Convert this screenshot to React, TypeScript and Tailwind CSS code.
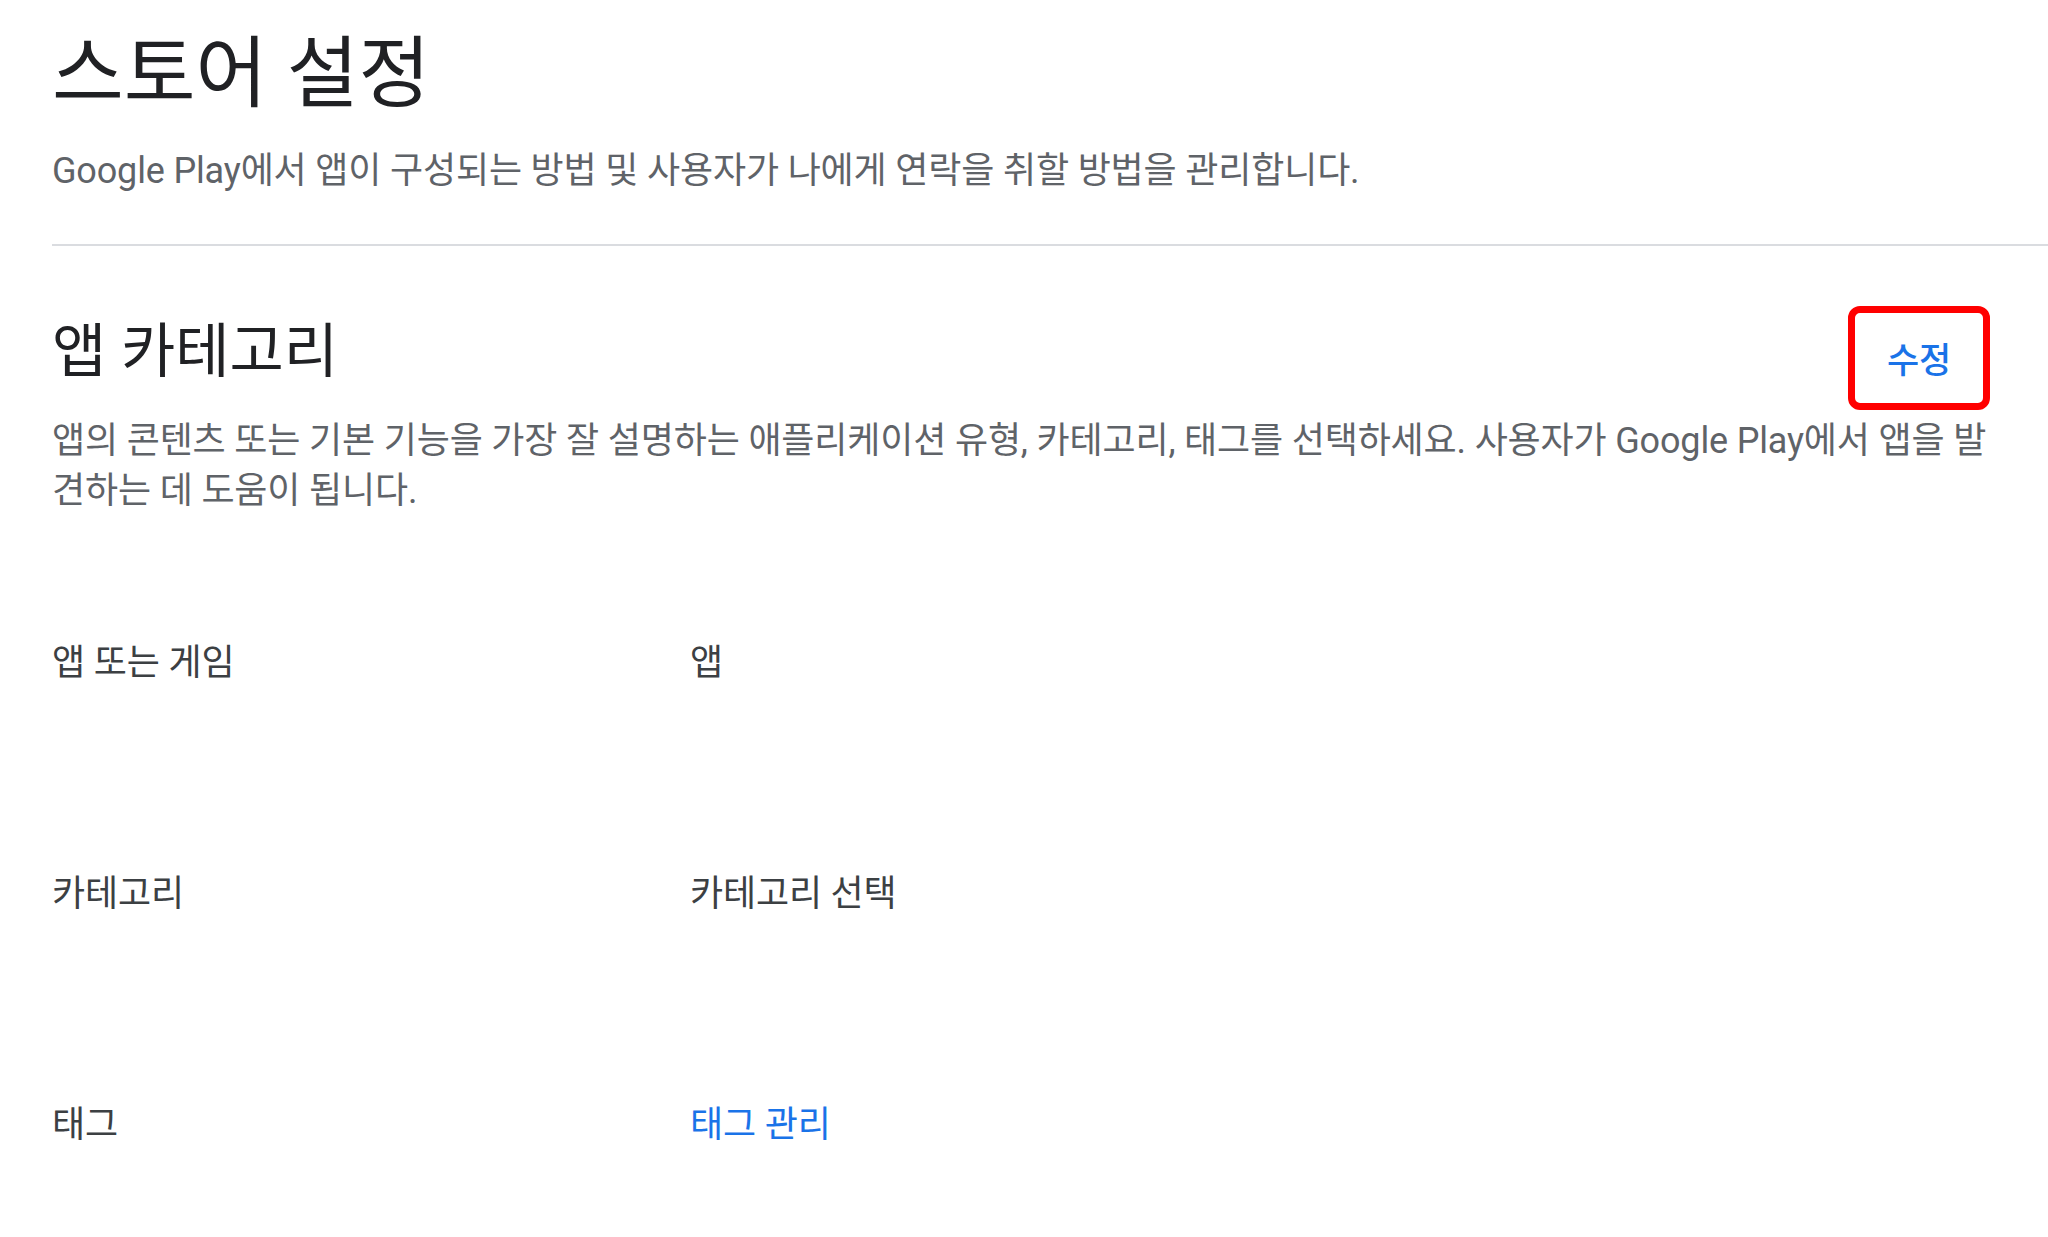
import React from "react";

const FONT = "font-['Roboto','Noto_Sans_CJK_KR',sans-serif]";

export default function App() {
  return (
    <div className={`min-h-screen bg-white pl-[52px] ${FONT} tracking-[-0.01em]`}>
      <div className="pr-[52px] pt-[27px]">
        <h1 className="text-[78px] leading-[96px] font-normal tracking-normal text-[#202124]">스토어 설정</h1>
        <p className="mt-[24px] text-[36px] leading-[48px] text-[#5f6368]">
          Google Play에서 앱이 구성되는 방법 및 사용자가 나에게 연락을 취할 방법을 관리합니다.
        </p>
      </div>
      <div className="mt-[49px] h-[2px] bg-[#dadce0]" />
      <div className="pr-[58px]">
        <div className="mt-[60px] flex items-start justify-between">
          <h2 className="mt-[10px] text-[59px] leading-[72px] font-normal tracking-normal text-[#202124]">앱 카테고리</h2>
          <button className="flex h-[104px] w-[142px] items-center justify-center rounded-[12px] border-[7px] border-[#ff0000] bg-white pt-[8px] text-[35px] leading-[40px] font-medium text-[#1a73e8]">
            수정
          </button>
        </div>
        <p className="mt-[6px] text-[36px] leading-[50px] text-[#5f6368]">
          앱의 콘텐츠 또는 기본 기능을 가장 잘 설명하는 애플리케이션 유형, 카테고리, 태그를 선택하세요. 사용자가 Google Play에서 앱을 발견하는 데 도움이 됩니다.
        </p>
        <div className="mt-[122px] flex flex-col gap-[181px] text-[36px] leading-[50px] text-[#3c4043]">
          <div className="grid grid-cols-[638px_1fr]">
            <div>앱 또는 게임</div>
            <div>앱</div>
          </div>
          <div className="grid grid-cols-[638px_1fr]">
            <div>카테고리</div>
            <div>카테고리 선택</div>
          </div>
          <div className="grid grid-cols-[638px_1fr]">
            <div>태그</div>
            <div>
              <a className="text-[#1a73e8] cursor-pointer">태그 관리</a>
            </div>
          </div>
        </div>
      </div>
    </div>
  );
}
